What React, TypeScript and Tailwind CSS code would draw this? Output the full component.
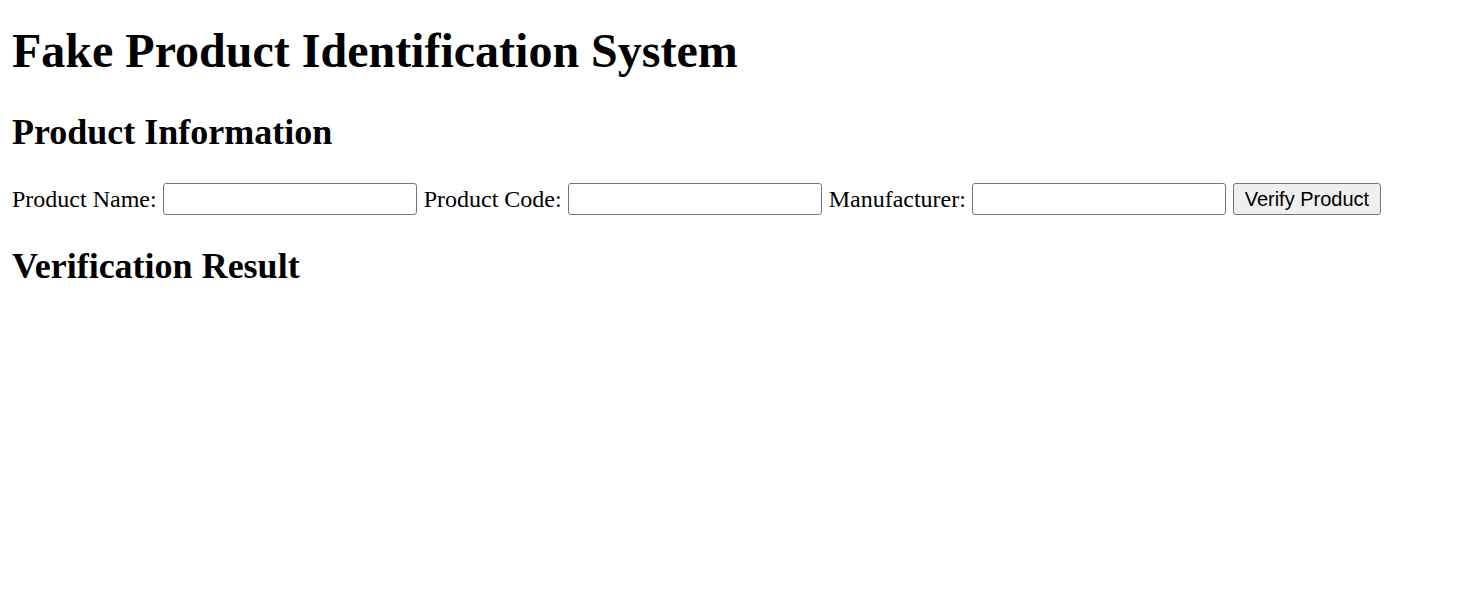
import { useState } from "react";

const serif = "font-['Liberation_Serif','Times_New_Roman',serif]";

function Field({ label, value, onChange }: { label: string; value: string; onChange: (v: string) => void }) {
  return (
    <>
      <label className="whitespace-nowrap">{label}</label>
      <input
        type="text"
        value={value}
        onChange={(e) => onChange(e.target.value)}
        className="w-[254px] h-[32px] px-[3px] border border-[#767676] rounded-[3px] bg-white text-[20px] font-['Liberation_Sans',Arial,sans-serif] outline-none"
      />
    </>
  );
}

export default function App() {
  const [name, setName] = useState("");
  const [code, setCode] = useState("");
  const [maker, setMaker] = useState("");

  return (
    <div className={`${serif} text-black bg-white min-h-[595px] px-[12px] pt-[24px]`}>
      <h1 className="text-[48px] font-bold leading-[54px]">Fake Product Identification System</h1>

      <h2 className="mt-[34px] text-[36px] font-bold leading-[40px]">Product Information</h2>

      <form
        className="mt-[31px] flex items-center gap-[6.5px] text-[24px] leading-[28px]"
        onSubmit={(e) => e.preventDefault()}
      >
        <Field label="Product Name:" value={name} onChange={setName} />
        <Field label="Product Code:" value={code} onChange={setCode} />
        <Field label="Manufacturer:" value={maker} onChange={setMaker} />
        <button
          type="submit"
          className="w-[148px] h-[32px] border border-[#767676] rounded-[3px] bg-[#efefef] text-[20px] leading-[24px] text-black font-['Liberation_Sans',Arial,sans-serif]"
        >
          Verify Product
        </button>
      </form>

      <h2 className="mt-[31px] text-[36px] font-bold leading-[40px]">Verification Result</h2>
    </div>
  );
}
